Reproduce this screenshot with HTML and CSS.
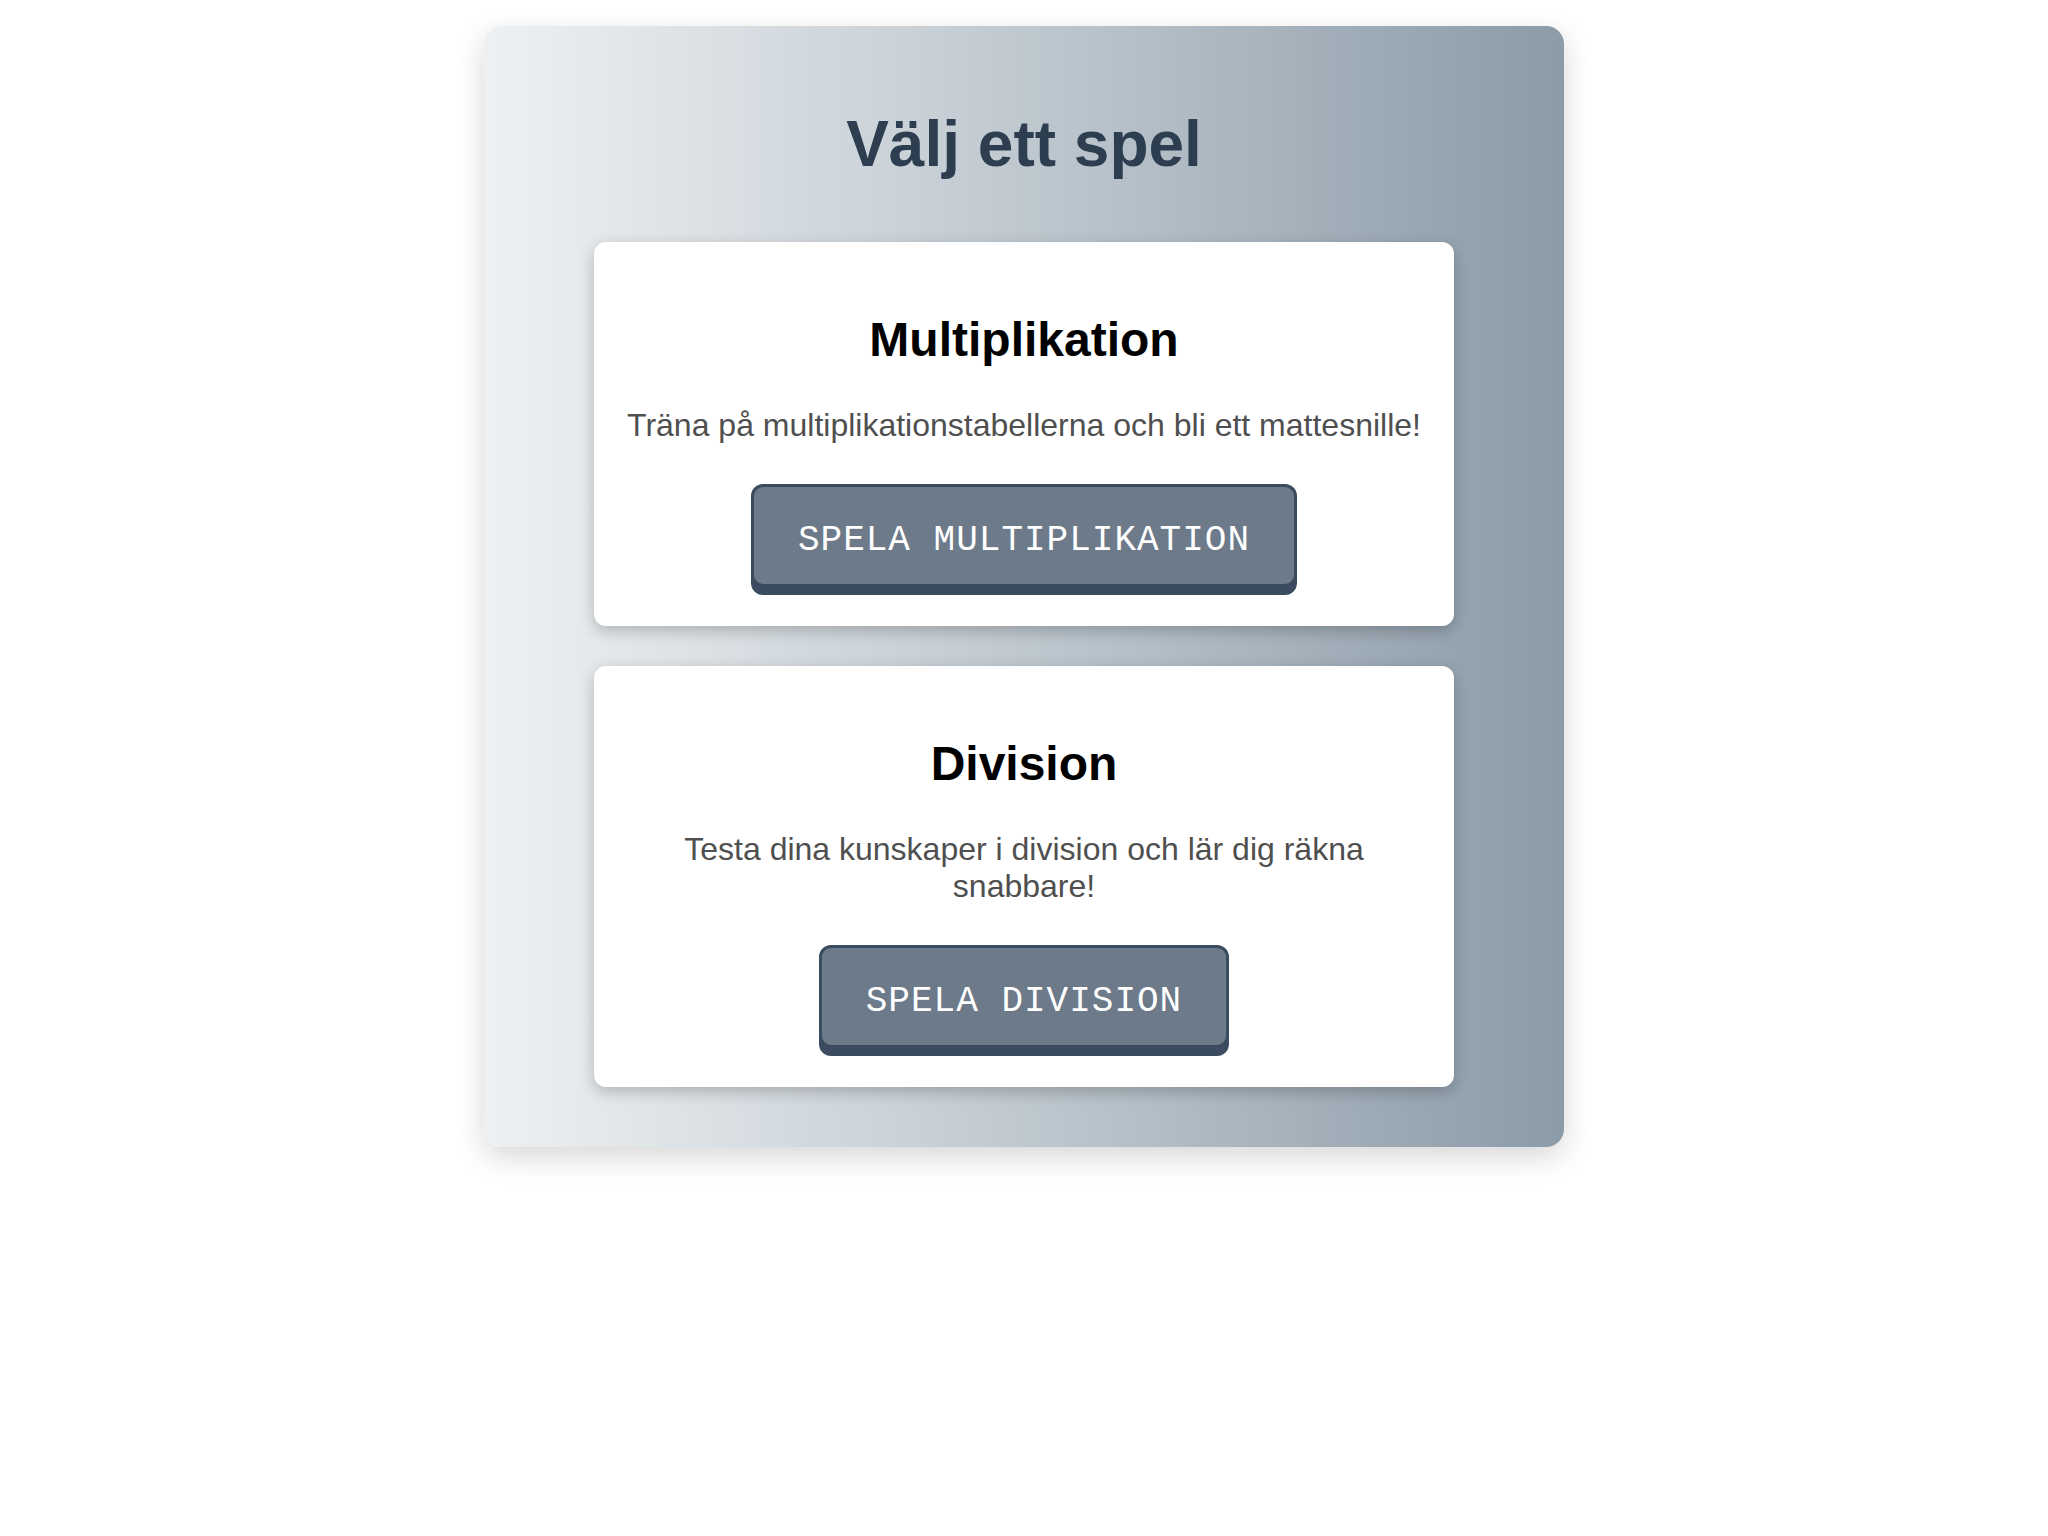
FILE: index.html
```html
<!DOCTYPE html>
<html lang="sv">
<head>
<meta charset="utf-8">
<title>Välj ett spel</title>
<link rel="stylesheet" href="styles.css">
</head>
<body>
  <main class="container">
    <h1 class="title">Välj ett spel</h1>
    <section class="card">
      <h2 class="card-title">Multiplikation</h2>
      <p class="card-text">Träna på multiplikationstabellerna och bli ett mattesnille!</p>
      <button class="play-btn">SPELA MULTIPLIKATION</button>
    </section>
    <section class="card">
      <h2 class="card-title">Division</h2>
      <p class="card-text">Testa dina kunskaper i division och lär dig räkna snabbare!</p>
      <button class="play-btn">SPELA DIVISION</button>
    </section>
  </main>
</body>
</html>
```

FILE: styles.css
```css
html, body {
  margin: 0;
  padding: 0;
  background: #ffffff;
}

body {
  font-family: "Liberation Sans", Arial, sans-serif;
  padding: 26px 0 80px;
}

.container {
  width: 1080px;
  box-sizing: border-box;
  margin: 0 auto;
  padding: 81px 0 60px;
  border-radius: 18px;
  background: linear-gradient(to right, #eef1f3 0%, #c9d1d7 40%, #8b9ba8 100%);
  box-shadow: 0 10px 30px rgba(0, 0, 0, 0.16);
  display: flex;
  flex-direction: column;
  align-items: center;
  gap: 40px;
}

.title {
  margin: 0 0 21px;
  font-size: 64px;
  font-weight: bold;
  color: #2c3e50;
  text-align: center;
  line-height: normal;
}

.card {
  width: 860px;
  box-sizing: border-box;
  padding: 30px;
  background: #ffffff;
  border-radius: 12px;
  box-shadow: 0 5px 15px rgba(0, 0, 0, 0.22);
  text-align: center;
}

.card-title {
  margin: 40px 0;
  font-size: 48px;
  font-weight: bold;
  color: #000000;
  line-height: normal;
}

.card-text {
  margin: 0 0 32px;
  font-size: 32px;
  color: #4f4f4f;
  line-height: normal;
}

.play-btn {
  display: inline-block;
  margin: 8px 0 9px;
  padding: 33px 44px 23px;
  font-family: "Courier New", "Nimbus Mono PS", "Nimbus Mono L", FreeMono, Courier, "Liberation Mono", monospace;
  font-size: 36px;
  font-weight: normal;
  letter-spacing: 1px;
  line-height: normal;
  color: #ffffff;
  background: #6c7a89;
  border: 3px solid #3b4c60;
  border-radius: 12px;
  box-shadow: 0 8px 0 #3b4c60;
  cursor: pointer;
}
```
